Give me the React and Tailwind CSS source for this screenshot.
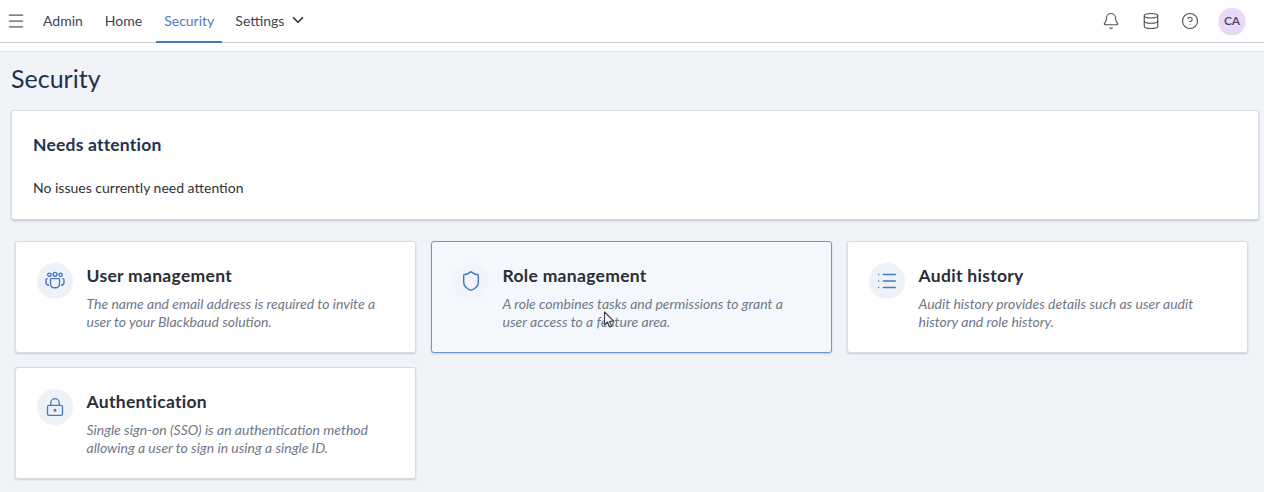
import React from "react";
import { Menu, ChevronDown, Bell, Database, CircleHelp, Shield, List, LockKeyhole } from "lucide-react";

const font = "font-['Lato','Noto_Sans',sans-serif]";

const UsersIcon = () => (
  <svg width="20" height="20" viewBox="0 0 20 20" fill="none" stroke="#4a78bd" strokeWidth="1.4">
    <circle cx="4.4" cy="3.8" r="1.7" />
    <circle cx="10" cy="3.3" r="1.9" />
    <circle cx="15.6" cy="3.8" r="1.7" />
    <path d="M2.8 7.6h-.6a1.2 1.2 0 0 0-1.2 1.2v2.4a3 3 0 0 0 3 3" />
    <path d="M17.2 7.6h.6a1.2 1.2 0 0 1 1.2 1.2v2.4a3 3 0 0 1-3 3" />
    <path d="M6.4 7.6h7.2a.9.9 0 0 1 .9.9v4.6a3.6 3.6 0 0 1-3.6 3.6H9.1a3.6 3.6 0 0 1-3.6-3.6V8.5a.9.9 0 0 1 .9-.9z" />
  </svg>
);

const Card = ({ icon, title, lines, active }) => (
  <div
    className={`h-[112px] w-[401px] shrink-0 rounded-[3px] border pl-[21px] pt-[21px] flex gap-[14px] shadow-[0_1px_2px_rgba(80,90,110,0.25)] ${
      active ? "border-[#6a98cd] bg-[#f4f8fd]" : "border-[#d9dce3] bg-white"
    }`}
  >
    <div className={`size-9 rounded-full flex items-center justify-center shrink-0 ${active ? "bg-[#f1f5fb]" : "bg-[#edf2f9]"}`}>
      {icon}
    </div>
    <div className="-ml-[0.5px]">
      <h3 className="text-[17.5px] leading-[26px] font-bold tracking-[0.3px] text-[#2a2e36]">{title}</h3>
      <p className="mt-[6px] text-[14px] leading-[18px] italic text-[#6f7785]">
        {lines[0]}
        <br />
        {lines[1]}
      </p>
    </div>
  </div>
);

export default function App() {
  return (
    <div className={`${font} relative h-[492px] w-[1264px] overflow-hidden bg-[#f0f3f8]`}>
      <header className="h-[52px] bg-white border-b border-[#dfe2e8]">
        <div className="h-[43px] border-b border-[#c9ccd6] flex items-center pl-[6px] pr-[19px]">
          <Menu className="size-5" color="#55585f" strokeWidth={1.5} />
          <nav className="ml-[17px] flex items-stretch h-full text-[14px] text-[#3f4450]">
            <span className="flex items-center pb-[2px]">Admin</span>
            <span className="ml-[22px] flex items-center pb-[2px] text-[#3a3f55]">Home</span>
            <span className="ml-[14px] px-[8px] flex items-center text-[#4f7cba] border-b-2 border-[#4679b8] -mb-px">Security</span>
            <span className="ml-[13px] flex items-center pb-[2px] gap-[5px]">
              Settings
              <ChevronDown className="size-[18px] text-[#2f323a]" strokeWidth={2.2} />
            </span>
          </nav>
          <div className="ml-auto flex items-center text-[#4b4e55]">
            <Bell className="size-[18px]" strokeWidth={1.5} />
            <Database className="ml-[22px] size-[18px]" strokeWidth={1.5} />
            <CircleHelp className="ml-[21px] size-[18px]" strokeWidth={1.5} />
            <div className="ml-[20px] size-[26px] rounded-full bg-[#e9d9f8] shadow-[0_1px_2px_rgba(80,80,110,0.3)] flex items-center justify-center text-[12px] font-semibold text-[#3d4560]">
              CA
            </div>
          </div>
        </div>
      </header>

      <main className="pl-[11px] pr-[5px]">
        <h1 className="mt-[10px] text-[25px] leading-[32px] text-[#1e3152]">Security</h1>

        <section className="mt-[16px] h-[110px] rounded-[3px] border border-[#d9dce3] bg-white pl-[21px] pt-[22px] shadow-[0_1px_2px_rgba(80,90,110,0.3)]">
          <h2 className="text-[17.5px] leading-[24px] font-bold tracking-[0.2px] text-[#22324f]">Needs attention</h2>
          <p className="mt-[22px] text-[14px] leading-[18px] text-[#2e323a]">No issues currently need attention</p>
        </section>

        <div className="mt-[21px] ml-[4px] flex flex-wrap gap-x-[15px] gap-y-[14px]">
          <Card
            icon={<UsersIcon />}
            title="User management"
            lines={["The name and email address is required to invite a", "user to your Blackbaud solution."]}
          />
          <Card
            active
            icon={<Shield className="size-[22px] text-[#4a78bd]" strokeWidth={1.6} />}
            title="Role management"
            lines={["A role combines tasks and permissions to grant a", "user access to a feature area."]}
          />
          <Card
            icon={<List className="size-[22px] text-[#4a78bd]" strokeWidth={1.6} />}
            title="Audit history"
            lines={["Audit history provides details such as user audit", "history and role history."]}
          />
          <Card
            icon={<LockKeyhole className="size-[20px] text-[#4a78bd]" strokeWidth={1.6} />}
            title="Authentication"
            lines={["Single sign-on (SSO) is an authentication method", "allowing a user to sign in using a single ID."]}
          />
        </div>
      </main>

      {/* mouse pointer caught in the recording */}
      <svg className="absolute left-[603px] top-[311px]" width="14" height="19" viewBox="0 0 14 19">
        <path d="M1.5 1v13l3-3 2.2 5 2-1-2.2-4.8h4.2z" fill="#f4f6fa" stroke="#3c4048" strokeWidth="1.1" strokeLinejoin="round" />
      </svg>
    </div>
  );
}
